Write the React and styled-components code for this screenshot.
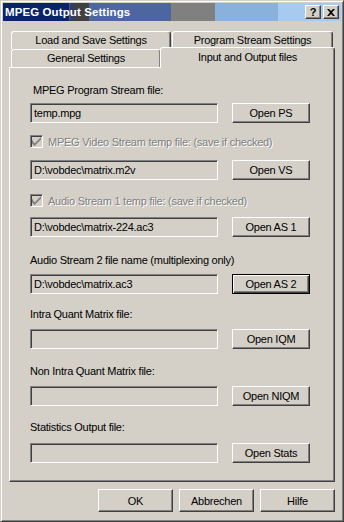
import React from "react";
import styled, { createGlobalStyle, css } from "styled-components";

const GlobalStyle = createGlobalStyle`
  html, body {
    margin: 0;
    padding: 0;
    background: #d4d0c8;
  }
  body {
    font-family: "Liberation Sans", Arial, sans-serif;
    font-size: 11px;
    letter-spacing: -0.25px;
    color: #000;
  }
`;

const Window = styled.div`
  width: 344px;
  height: 522px;
  box-sizing: border-box;
  background: #d4d0c8;
  border-top: 1px solid #d4d0c8;
  border-left: 1px solid #d4d0c8;
  border-right: 1px solid #404040;
  border-bottom: 1px solid #404040;
  box-shadow: inset 1px 1px #fff, inset -1px -1px #808080;
  padding: 2px;
  display: flex;
  flex-direction: column;
`;

const Caption = styled.div`
  height: 18px;
  display: flex;
  align-items: center;
  padding: 0 2px 0 2px;
  background: linear-gradient(
    to right,
    #0a246a 0px,
    #0a246a 66px,
    #5a5a64 66px,
    #2c3a6c 68px,
    #404040 74px,
    #404040 86px,
    #4e66a0 86px,
    #4e66a0 168px,
    #808080 168px,
    #808080 212px,
    #88b2dc 212px,
    #88b2dc 275px,
    #a6caf0 275px
  );
`;

const CaptionText = styled.span`
  flex: 1;
  color: #fff;
  font-weight: bold;
  font-size: 11.5px;
  letter-spacing: 0.1px;
`;

const CaptionButton = styled.div`
  width: 16px;
  height: 14px;
  box-sizing: border-box;
  background: #d4d0c8;
  border-top: 1px solid #fff;
  border-left: 1px solid #fff;
  border-right: 1px solid #404040;
  border-bottom: 1px solid #404040;
  box-shadow: inset -1px -1px #808080;
  display: flex;
  align-items: center;
  justify-content: center;
  font-weight: bold;
  font-size: 11px;
  line-height: 12px;
  margin-left: ${(p) => (p.$gap ? "2px" : "0")};
`;

const Body = styled.div`
  flex: 1;
  padding: 10px 6px 0 6px;
  display: flex;
  flex-direction: column;
`;

const TabRow = styled.div`
  display: flex;
  height: 18px;
  align-items: flex-start;
  padding-left: 2px;
`;

const Tab = styled.div`
  position: relative;
  box-sizing: border-box;
  width: ${(p) => p.$width}px;
  height: 18px;
  margin-right: ${(p) => p.$gap || 0}px;
  background: #d4d0c8;
  border-top: 1px solid #fff;
  border-left: 1px solid #fff;
  border-right: 1px solid #404040;
  border-radius: 3px 3px 0 0;
  box-shadow: inset -1px 0 #808080;
  text-align: center;
  line-height: 17px;
  white-space: nowrap;

  ${(p) =>
    p.$active &&
    css`
      z-index: 1;
      margin-top: -2px;
      margin-left: -1px;
      height: 21px;
      line-height: 18px;
    `}
`;

const Panel = styled.div`
  box-sizing: border-box;
  height: 415px;
  border-top: 1px solid #fff;
  border-left: 1px solid #fff;
  border-right: 1px solid #404040;
  border-bottom: 1px solid #404040;
  box-shadow: inset -1px -1px #808080;
  padding: 0 0 0 20px;
  display: flex;
  flex-direction: column;
`;

const Field = styled.div`
  display: flex;
  flex-direction: column;
  margin-top: ${(p) => p.$mt}px;
`;

const Label = styled.div`
  height: 13px;
  line-height: 13px;
  padding-left: ${(p) => p.$indent || 0}px;
  white-space: nowrap;
`;

const CheckLine = styled.div`
  display: flex;
  align-items: center;
  height: 13px;
  gap: 5px;
  color: #808080;
  text-shadow: 1px 1px 0 #fff;
  white-space: nowrap;
`;

const CheckBox = styled.div`
  width: 13px;
  height: 13px;
  box-sizing: border-box;
  border-top: 1px solid #808080;
  border-left: 1px solid #808080;
  border-right: 1px solid #fff;
  border-bottom: 1px solid #fff;
  box-shadow: inset 1px 1px #404040, inset -1px -1px #d4d0c8;
  background: #d4d0c8;
  display: flex;
  align-items: center;
  justify-content: center;
`;

const InputRow = styled.div`
  display: flex;
  align-items: center;
  gap: 14px;
  margin-top: ${(p) => p.$gap}px;
`;

const TextBox = styled.div`
  width: 188px;
  height: 20px;
  box-sizing: border-box;
  border-top: 1px solid #808080;
  border-left: 1px solid #808080;
  border-right: 1px solid #fff;
  border-bottom: 1px solid #fff;
  box-shadow: inset 1px 1px #404040, inset -1px -1px #d4d0c8;
  background: #d4d0c8;
  padding-left: 3px;
  line-height: 18px;
  white-space: nowrap;
  overflow: hidden;
`;

const Button = styled.div`
  width: ${(p) => p.$width}px;
  height: ${(p) => p.$height}px;
  box-sizing: border-box;
  background: #d4d0c8;
  border-top: 1px solid #fff;
  border-left: 1px solid #fff;
  border-right: 1px solid #404040;
  border-bottom: 1px solid #404040;
  box-shadow: inset -1px -1px #808080;
  display: flex;
  align-items: center;
  justify-content: center;
  white-space: nowrap;

  ${(p) =>
    p.$default &&
    css`
      border: 1px solid #000;
      box-shadow: inset 1px 1px #fff, inset -1px -1px #404040,
        inset -2px -2px #808080;
    `}
`;

const Footer = styled.div`
  display: flex;
  justify-content: flex-end;
  gap: 6px;
  margin-top: 7px;
`;

const Check = () => (
  <svg width="9" height="9" viewBox="0 0 7 7">
    <path d="M0 2 L0 5 L2 7 L7 2 L7 0 L2 5 Z" fill="#808080" />
  </svg>
);

const fields = [
  { label: "MPEG Program Stream file:", indent: 3, value: "temp.mpg", button: "Open PS", mt: 16, gap: 6 },
  { label: "MPEG Video Stream temp file: (save if checked)", check: true, value: "D:\\vobdec\\matrix.m2v", button: "Open VS", mt: 12, gap: 12 },
  { label: "Audio Stream 1 temp file: (save if checked)", check: true, value: "D:\\vobdec\\matrix-224.ac3", button: "Open AS 1", mt: 14, gap: 10 },
  { label: "Audio Stream 2 file name (multiplexing only)", value: "D:\\vobdec\\matrix.ac3", button: "Open AS 2", mt: 17, gap: 7, isDefault: true },
  { label: "Intra Quant Matrix file:", value: "", button: "Open IQM", mt: 14, gap: 8 },
  { label: "Non Intra Quant Matrix file:", value: "", button: "Open NIQM", mt: 16, gap: 8 },
  { label: "Statistics Output file:", value: "", button: "Open Stats", mt: 15, gap: 9 },
];

const App = () => {
  return (
    <>
      <GlobalStyle />
      <Window>
        <Caption>
          <CaptionText>MPEG Output Settings</CaptionText>
          <CaptionButton>?</CaptionButton>
          <CaptionButton $gap>
            <svg width="8" height="7" viewBox="0 0 8 7">
              <path d="M0 0 L2 0 L4 2 L6 0 L8 0 L5 3.5 L8 7 L6 7 L4 5 L2 7 L0 7 L3 3.5 Z" fill="#000" />
            </svg>
          </CaptionButton>
        </Caption>

        <Body>
          {/* back row of tabs */}
          <TabRow>
            <Tab $width={160} $gap={1}>Load and Save Settings</Tab>
            <Tab $width={161}>Program Stream Settings</Tab>
          </TabRow>
          {/* front row with the selected tab */}
          <TabRow>
            <Tab $width={150}>General Settings</Tab>
            <Tab $width={175} $active>Input and Output files</Tab>
          </TabRow>

          <Panel>
            {fields.map((f) => (
              <Field key={f.button} $mt={f.mt}>
                {f.check ? (
                  <CheckLine>
                    <CheckBox>
                      <Check />
                    </CheckBox>
                    {f.label}
                  </CheckLine>
                ) : (
                  <Label $indent={f.indent}>{f.label}</Label>
                )}
                <InputRow $gap={f.gap}>
                  <TextBox>{f.value}</TextBox>
                  <Button $width={78} $height={20} $default={f.isDefault}>
                    {f.button}
                  </Button>
                </InputRow>
              </Field>
            ))}
          </Panel>

          <Footer>
            <Button $width={75} $height={23}>OK</Button>
            <Button $width={75} $height={23}>Abbrechen</Button>
            <Button $width={75} $height={23}>Hilfe</Button>
          </Footer>
        </Body>
      </Window>
    </>
  );
};

export default App;
